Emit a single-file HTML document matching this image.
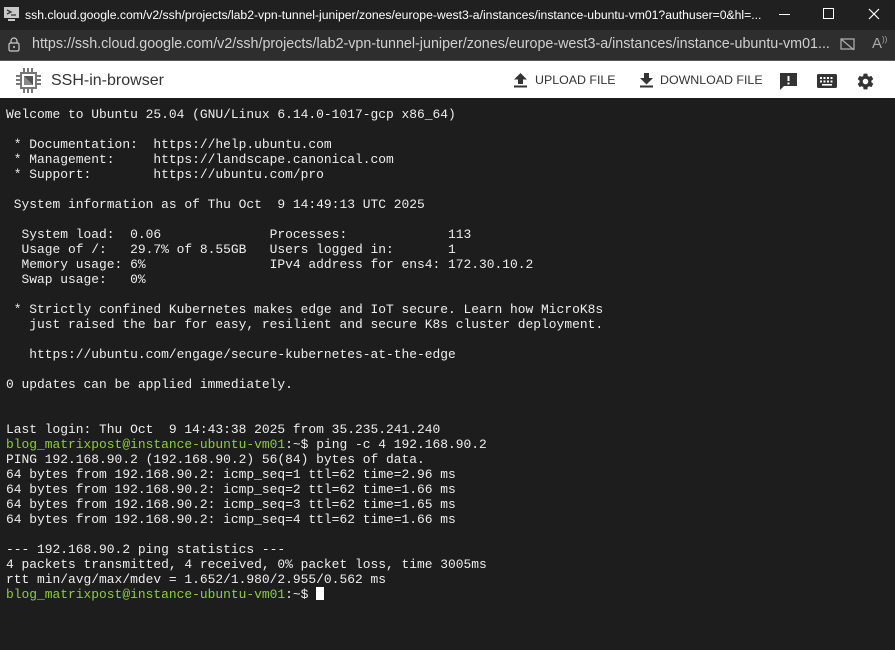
<!DOCTYPE html>
<html><head><meta charset="utf-8"><style>
html,body{margin:0;padding:0;width:895px;height:650px;overflow:hidden;background:#1d1d1d;font-family:"Liberation Sans",sans-serif}
.title{position:absolute;top:0;left:0;width:895px;height:30px;background:#202020;color:#fff;font-size:12.2px}
.title .t{position:absolute;left:25px;top:8px;white-space:nowrap}
.addr{position:absolute;top:30px;left:0;width:895px;height:30px;background:#2e2e2e;color:#d0d0d0;font-size:14.3px}
.addr .u{position:absolute;left:32px;top:6px;white-space:nowrap}
.app{position:absolute;top:60px;left:0;width:895px;height:38px;background:#fff;border-top:1px solid #555;box-sizing:border-box}
.app .name{position:absolute;left:51px;top:11px;font-size:16px;color:#333}
.btn{position:absolute;top:12px;font-size:12.4px;color:#333}
.term{position:absolute;top:99px;left:0;width:895px;height:551px;background:#1d1d1d}
pre{margin:0;position:absolute;left:6px;top:8px;font-family:"Liberation Mono",monospace;font-size:12.93px;line-height:15px;color:#eee}
.g{color:#8ccf3a}
.cur{display:inline-block;width:8px;height:13px;background:#fff;vertical-align:-2px}
</style></head><body>
<div class="title">
<svg style="position:absolute;left:4px;top:7px" width="16" height="15"><rect x="0" y="0" width="15" height="11" fill="#c8c8c8"/><path d="M3 3l4 2-4 2M7 8h5" stroke="#333" stroke-width="1.3" fill="none"/><rect x="4" y="12" width="7" height="2" fill="#c8c8c8"/></svg>
<span class="t">ssh.cloud.google.com/v2/ssh/projects/lab2-vpn-tunnel-juniper/zones/europe-west3-a/instances/instance-ubuntu-vm01?authuser=0&amp;hl=...</span>
<svg style="position:absolute;left:779px;top:14px" width="12" height="2"><rect width="11" height="1" fill="#fff"/></svg>
<svg style="position:absolute;left:823px;top:8px" width="12" height="12"><rect x="0.5" y="0.5" width="10" height="10" fill="none" stroke="#fff"/></svg>
<svg style="position:absolute;left:868px;top:8px" width="12" height="12"><path d="M1 1l10 10M11 1L1 11" stroke="#fff" stroke-width="1.2"/></svg>
</div>
<div class="addr">
<svg style="position:absolute;left:8px;top:7px" width="12" height="15"><path d="M3 6V4a3 3 0 0 1 6 0v2" fill="none" stroke="#ccc" stroke-width="1.2"/><rect x="1" y="6" width="10" height="8" rx="1.5" fill="none" stroke="#ccc" stroke-width="1.2"/><circle cx="6" cy="10" r="1" fill="#ccc"/></svg>
<span class="u">https://ssh.cloud.google.com/v2/ssh/projects/lab2-vpn-tunnel-juniper/zones/europe-west3-a/instances/instance-ubuntu-vm01...</span>
<svg style="position:absolute;left:840px;top:8px" width="15" height="13"><rect x="1" y="1" width="13" height="10" fill="none" stroke="#aaa" stroke-width="1.3"/><path d="M1 1l13 11" stroke="#aaa" stroke-width="1.3"/></svg>
<span style="position:absolute;left:872px;top:5px;color:#aaa;font-size:15px">A<sup style="font-size:8px">))</sup></span>
</div>
<div class="app">
<svg style="position:absolute;left:15px;top:6px" width="27" height="27" viewBox="0 0 27 27"><g fill="#777"><rect x="5" y="5" width="17" height="17"/><rect x="8" y="1" width="2" height="4"/><rect x="12" y="1" width="2" height="4"/><rect x="16" y="1" width="2" height="4"/><rect x="8" y="22" width="2" height="4"/><rect x="12" y="22" width="2" height="4"/><rect x="16" y="22" width="2" height="4"/><rect x="1" y="8" width="4" height="2"/><rect x="1" y="12" width="4" height="2"/><rect x="1" y="16" width="4" height="2"/><rect x="22" y="8" width="4" height="2"/><rect x="22" y="12" width="4" height="2"/><rect x="22" y="16" width="4" height="2"/></g><rect x="7" y="7" width="13" height="13" fill="#fff"/><rect x="9" y="9" width="9" height="9" fill="#555"/><path d="M9 9l9 9H9z" fill="#888"/></svg>
<span class="name">SSH-in-browser</span>
<svg style="position:absolute;left:514px;top:12px" width="13" height="15"><path d="M6.5 0L0 6.5h4V11h5V6.5h4z" fill="#333"/><rect y="12.5" width="13" height="2" fill="#333"/></svg>
<span class="btn" style="left:535px">UPLOAD FILE</span>
<svg style="position:absolute;left:640px;top:12px" width="13" height="15"><path d="M4 0h5v5h4L6.5 11.5 0 5h4z" fill="#333"/><rect y="12.5" width="13" height="2" fill="#333"/></svg>
<span class="btn" style="left:660px">DOWNLOAD FILE</span>
<svg style="position:absolute;left:780px;top:12px" width="18" height="18"><path d="M0 0h17v13H4l-4 4z" fill="#333"/><rect x="7.5" y="3" width="2" height="5" fill="#fff"/><rect x="7.5" y="9.5" width="2" height="2" fill="#fff"/></svg>
<svg style="position:absolute;left:817px;top:13px" width="20" height="14"><rect width="20" height="14" rx="1.5" fill="#333"/><g fill="#fff"><rect x="3" y="3" width="2" height="2"/><rect x="6.5" y="3" width="2" height="2"/><rect x="10" y="3" width="2" height="2"/><rect x="13.5" y="3" width="2" height="2"/><rect x="3" y="6.5" width="2" height="2"/><rect x="6.5" y="6.5" width="2" height="2"/><rect x="10" y="6.5" width="2" height="2"/><rect x="13.5" y="6.5" width="2" height="2"/><rect x="5" y="10" width="10" height="1.6"/></g></svg>
<svg style="position:absolute;left:856px;top:11px" width="19" height="19" viewBox="0 0 24 24"><path fill="#333" d="M19.4 13c.04-.3.06-.6.06-1s-.02-.7-.06-1l2.1-1.650c.2-.15.24-.42.12-.64l-2-3.46c-.12-.22-.39-.3-.61-.22l-2.49 1c-.52-.4-1.080-.73-1.69-.98l-.38-2.65A.49.49 0 0 0 14 2h-4c-.25 0-.46.18-.49.42l-.38 2.65c-.61.25-1.17.59-1.69.98l-2.49-1a.5.5 0 0 0-.61.22l-2 3.46c-.13.22-.07.49.12.64L4.57 11c-.04.32-.07.65-.07 1s.03.68.07 1l-2.11 1.65c-.19.15-.24.42-.12.64l2 3.46c.12.22.39.3.61.22l2.49-1c.52.4 1.08.73 1.69.98l.38 2.65c.03.24.24.42.49.42h4c.25 0 .46-.18.49-.42l.38-2.65c.61-.25 1.17-.59 1.69-.98l2.49 1c.23.09.49 0 .61-.22l2-3.46c.12-.22.07-.49-.12-.64L19.4 13zM12 15.5a3.5 3.5 0 1 1 0-7 3.5 3.5 0 0 1 0 7z"/></svg>
</div>
<div class="term"><pre>Welcome to Ubuntu 25.04 (GNU/Linux 6.14.0-1017-gcp x86_64)

 * Documentation:  https://help.ubuntu.com
 * Management:     https://landscape.canonical.com
 * Support:        https://ubuntu.com/pro

 System information as of Thu Oct  9 14:49:13 UTC 2025

  System load:  0.06              Processes:             113
  Usage of /:   29.7% of 8.55GB   Users logged in:       1
  Memory usage: 6%                IPv4 address for ens4: 172.30.10.2
  Swap usage:   0%

 * Strictly confined Kubernetes makes edge and IoT secure. Learn how MicroK8s
   just raised the bar for easy, resilient and secure K8s cluster deployment.

   https://ubuntu.com/engage/secure-kubernetes-at-the-edge

0 updates can be applied immediately.


Last login: Thu Oct  9 14:43:38 2025 from 35.235.241.240
<span class="g">blog_matrixpost@instance-ubuntu-vm01</span>:~$ ping -c 4 192.168.90.2
PING 192.168.90.2 (192.168.90.2) 56(84) bytes of data.
64 bytes from 192.168.90.2: icmp_seq=1 ttl=62 time=2.96 ms
64 bytes from 192.168.90.2: icmp_seq=2 ttl=62 time=1.66 ms
64 bytes from 192.168.90.2: icmp_seq=3 ttl=62 time=1.65 ms
64 bytes from 192.168.90.2: icmp_seq=4 ttl=62 time=1.66 ms

--- 192.168.90.2 ping statistics ---
4 packets transmitted, 4 received, 0% packet loss, time 3005ms
rtt min/avg/max/mdev = 1.652/1.980/2.955/0.562 ms
<span class="g">blog_matrixpost@instance-ubuntu-vm01</span>:~$ <span class="cur"></span></pre></div>
</body></html>
